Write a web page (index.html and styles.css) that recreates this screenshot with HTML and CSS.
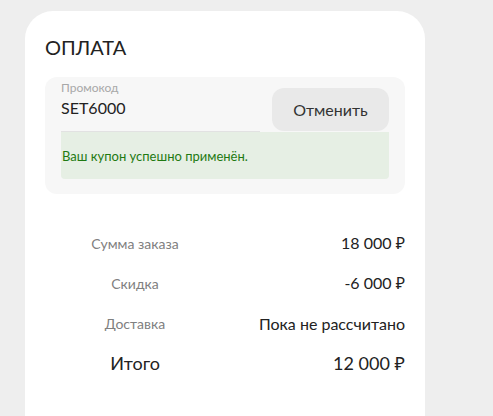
FILE: index.html
```html
<!DOCTYPE html>
<html lang="ru">
<head>
    <meta charset="UTF-8">
    <meta name="viewport" content="width=device-width, initial-scale=1.0">
    <title>Оплата</title>
    <link rel="stylesheet" href="styles.css">
</head>
<body>

    <div class="payment-card">
        <h2 class="payment-title">ОПЛАТА</h2>

        <!-- промокод -->
        <div class="promo-box">
            <div class="promo-row">
                <div class="promo-field">
                    <label class="promo-label">Промокод</label>
                    <div class="promo-value">SET6000</div>
                </div>
                <button class="cancel-button">Отменить</button>
            </div>
            <div class="promo-success">Ваш купон успешно применён.</div>
        </div>

        <!-- итоги -->
        <div class="summary">
            <div class="summary-row">
                <span class="summary-label">Сумма заказа</span>
                <span class="summary-value">18 000 ₽</span>
            </div>
            <div class="summary-row">
                <span class="summary-label">Скидка</span>
                <span class="summary-value">-6 000 ₽</span>
            </div>
            <div class="summary-row">
                <span class="summary-label">Доставка</span>
                <span class="summary-value">Пока не рассчитано</span>
            </div>
            <div class="summary-row total">
                <span class="summary-label">Итого</span>
                <span class="summary-value">12 000 ₽</span>
            </div>
        </div>
    </div>

</body>
</html>
```

FILE: styles.css
```css
html, body {
    overflow: hidden;
}
body {
    margin: 0;
    padding: 11px 0 0 25px;
    background-color: #eeeeee;
    font-family: Lato, "Noto Sans", sans-serif;
    color: #222;
}
.payment-card {
    width: 360px;
    height: 381px;
    padding: 24px 20px 0;
    background-color: #fff;
    border-radius: 28px 28px 0 0;
}
.payment-title {
    margin: 0 0 18px;
    font-size: 20px;
    font-weight: 400;
    line-height: 24px;
}
.promo-box {
    padding: 4px 16px 15px;
    background-color: #f7f7f7;
    border-radius: 12px;
}
.promo-row {
    display: flex;
    align-items: flex-start;
    justify-content: space-between;
}
.promo-field {
    width: 199px;
    height: 50px;
    border-bottom: 1px solid #e2e2e2;
}
.promo-label {
    display: block;
    font-size: 12px;
    line-height: 14px;
    color: #a8a8a8;
}
.promo-value {
    margin-top: 3px;
    font-size: 16px;
    line-height: 20px;
}
.cancel-button {
    width: 117px;
    height: 43px;
    margin-top: 7px;
    font-family: inherit;
    font-size: 16px;
    color: #333;
    background-color: #e9e9e9;
    border: none;
    border-radius: 12px;
    cursor: pointer;
}
.promo-success {
    height: 47px;
    padding-left: 1px;
    display: flex;
    align-items: center;
    font-size: 13px;
    color: #1f7a12;
    background-color: #e6efe4;
    border-radius: 0 0 4px 4px;
}
.summary {
    margin-top: 29px;
}
.summary-row {
    display: grid;
    grid-template-columns: 1fr 1fr;
    align-items: center;
    height: 40px;
}
.summary-label {
    text-align: center;
    font-size: 14px;
    color: #808080;
}
.summary-value {
    text-align: right;
    font-size: 16px;
}
.summary-row.total .summary-label,
.summary-row.total .summary-value {
    font-size: 18px;
    color: #222;
}
```
